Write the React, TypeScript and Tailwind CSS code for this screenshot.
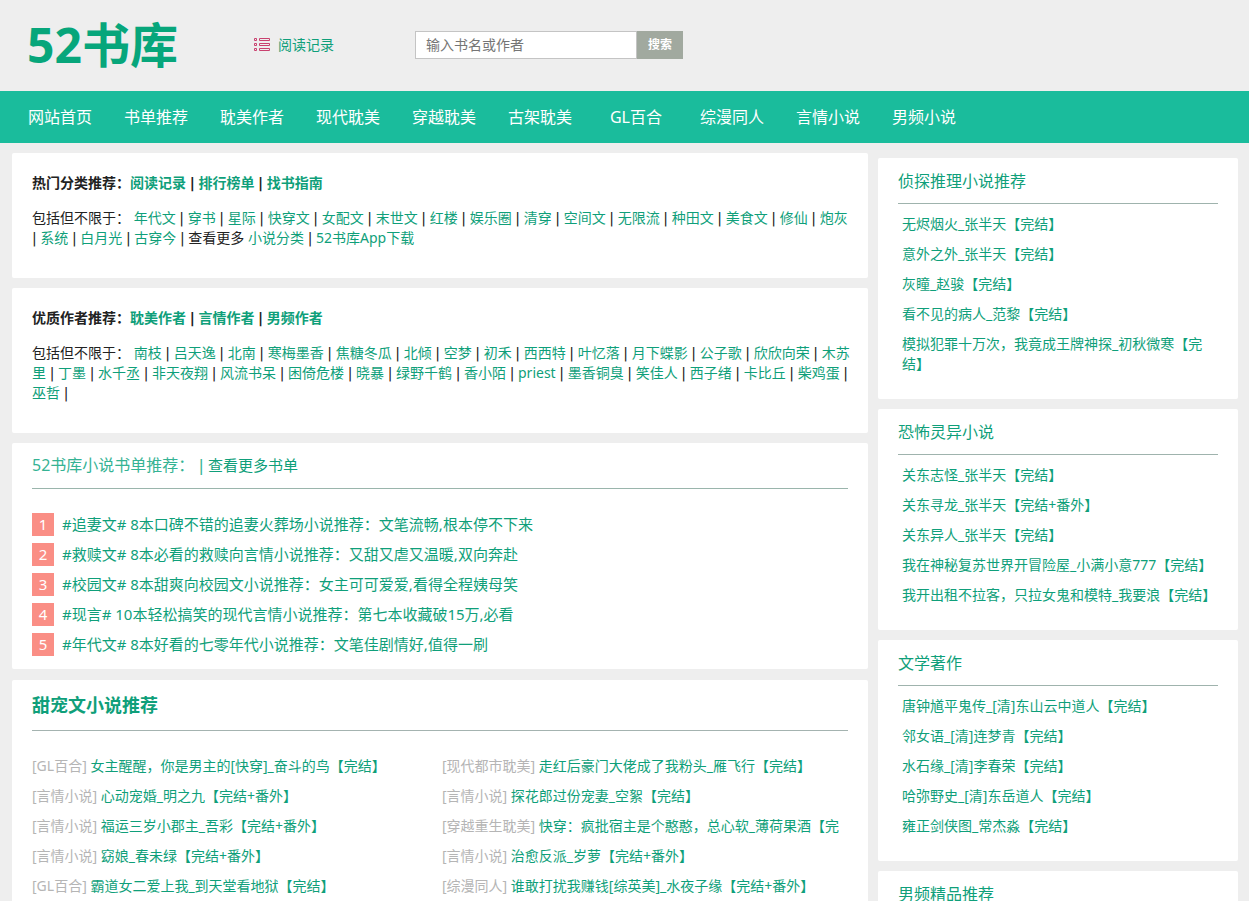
import React, { Fragment } from "react";

const navItems = ["网站首页", "书单推荐", "耽美作者", "现代耽美", "穿越耽美", "古架耽美", "GL百合", "综漫同人", "言情小说", "男频小说"];

const categories = ["年代文", "穿书", "星际", "快穿文", "女配文", "末世文", "红楼", "娱乐圈", "清穿", "空间文", "无限流", "种田文", "美食文", "修仙", "炮灰", "系统", "白月光", "古穿今"];

const authors = ["南枝", "吕天逸", "北南", "寒梅墨香", "焦糖冬瓜", "北倾", "空梦", "初禾", "西西特", "叶忆落", "月下蝶影", "公子歌", "欣欣向荣", "木苏里", "丁墨", "水千丞", "非天夜翔", "风流书呆", "困倚危楼", "晓暴", "绿野千鹤", "香小陌", "priest", "墨香铜臭", "笑佳人", "西子绪", "卡比丘", "柴鸡蛋", "巫哲"];

const bookLists = [
  "#追妻文# 8本口碑不错的追妻火葬场小说推荐：文笔流畅,根本停不下来",
  "#救赎文# 8本必看的救赎向言情小说推荐：又甜又虐又温暖,双向奔赴",
  "#校园文# 8本甜爽向校园文小说推荐：女主可可爱爱,看得全程姨母笑",
  "#现言# 10本轻松搞笑的现代言情小说推荐：第七本收藏破15万,必看",
  "#年代文# 8本好看的七零年代小说推荐：文笔佳剧情好,值得一刷",
];

const sweetNovels: [string, string][] = [
  ["GL百合", "女主醒醒，你是男主的[快穿]_奋斗的鸟【完结】"],
  ["现代都市耽美", "走红后豪门大佬成了我粉头_雁飞行【完结】"],
  ["言情小说", "心动宠婚_明之九【完结+番外】"],
  ["言情小说", "探花郎过份宠妻_空絮【完结】"],
  ["言情小说", "福运三岁小郡主_吾彩【完结+番外】"],
  ["穿越重生耽美", "快穿：疯批宿主是个憨憨，总心软_薄荷果酒【完结】"],
  ["言情小说", "窈娘_春未绿【完结+番外】"],
  ["言情小说", "治愈反派_岁萝【完结+番外】"],
  ["GL百合", "霸道女二爱上我_到天堂看地狱【完结】"],
  ["综漫同人", "谁敢打扰我赚钱[综英美]_水夜子缘【完结+番外】"],
];

const sidebar = [
  {
    title: "侦探推理小说推荐",
    items: ["无烬烟火_张半天【完结】", "意外之外_张半天【完结】", "灰瞳_赵骏【完结】", "看不见的病人_范黎【完结】", "模拟犯罪十万次，我竟成王牌神探_初秋微寒【完结】"],
  },
  {
    title: "恐怖灵异小说",
    items: ["关东志怪_张半天【完结】", "关东寻龙_张半天【完结+番外】", "关东异人_张半天【完结】", "我在神秘复苏世界开冒险屋_小满小意777【完结】", "我开出租不拉客，只拉女鬼和模特_我要浪【完结】"],
  },
  {
    title: "文学著作",
    items: ["唐钟馗平鬼传_[清]东山云中道人【完结】", "邻女语_[清]连梦青【完结】", "水石缘_[清]李春荣【完结】", "哈弥野史_[清]东岳道人【完结】", "雍正剑侠图_常杰淼【完结】"],
  },
  { title: "男频精品推荐", items: [] },
];

function Link({ children, className = "" }: { children: React.ReactNode; className?: string }) {
  return (
    <a href="#" className={`text-[#0f9f7a] hover:underline ${className}`}>
      {children}
    </a>
  );
}

function Bar() {
  return (
    <>
      {" "}
      <span className="font-['DejaVu_Sans',sans-serif]">|</span>{" "}
    </>
  );
}

function Topic({ title, links, children }: { title: string; links: string[]; children: React.ReactNode }) {
  return (
    <section className="rounded-[2px] bg-white pt-5 pr-[15px] pb-[30px] pl-5 text-sm leading-5">
      <h2 className="mb-[15px] font-bold">
        {title}
        {links.map((text, i) => (
          <Fragment key={text}>
            {i > 0 && <Bar />}
            <Link>{text}</Link>
          </Fragment>
        ))}
      </h2>
      <p>包括但不限于： {children}</p>
    </section>
  );
}

export default function App() {
  return (
    <div className="h-screen overflow-hidden bg-[#eeeeee] font-['Noto_Sans','Noto_Sans_CJK_SC',sans-serif] text-[#222222]">
      <header className="flex h-[91px] items-center pb-px pl-[27px]">
        <h1 className="w-[227px] shrink-0 text-5xl font-bold">
          <a href="#" className="text-[#07a67b]">52书库</a>
        </h1>
        <div className="w-[161px] shrink-0">
          <a href="#" className="inline-flex items-center gap-2 text-sm leading-5 text-[#0f9f7a]">
            <svg width="16" height="13" viewBox="0 0 16 13" fill="none" stroke="#c9416f" aria-hidden="true">
              <path d="M.5 .5h2v2h-2zM.5 5.5h2v2h-2zM.5 10.5h2v2h-2zM5.5 .5h10v2h-10zM5.5 5.5h10v2h-10zM5.5 10.5h10v2h-10z" />
            </svg>
            阅读记录
          </a>
        </div>
        <form className="flex h-7" onSubmit={(e) => e.preventDefault()}>
          <input
            type="text"
            aria-label="输入书名或作者"
            placeholder="输入书名或作者"
            className="w-[222px] border border-[#c4c4c4] bg-white px-[10px] text-sm outline-none placeholder:text-[#757575]"
          />
          <button type="submit" className="w-[46px] bg-[#a1a99f] text-xs font-bold text-white">搜索</button>
        </form>
      </header>

      <nav className="flex h-[52px] items-center bg-[#1abc9c] px-3">
        {navItems.map((item) => (
          <a key={item} href="#" className="w-24 text-center text-base text-white">{item}</a>
        ))}
      </nav>

      <div className="flex items-start gap-[10px] pt-[10px] pr-[11px] pl-3">
        <main className="flex min-w-0 flex-1 flex-col gap-[10px]">
          <Topic title="热门分类推荐：" links={["阅读记录", "排行榜单", "找书指南"]}>
            {categories.map((text) => (
              <Fragment key={text}>
                <Link>{text}</Link>
                <Bar />
              </Fragment>
            ))}
            查看更多 <Link>小说分类</Link>
            <Bar />
            <Link>52书库App下载</Link>
          </Topic>

          <Topic title="优质作者推荐：" links={["耽美作者", "言情作者", "男频作者"]}>
            {authors.map((text) => (
              <Fragment key={text}>
                <Link>{text}</Link>
                <Bar />
              </Fragment>
            ))}
          </Topic>

          <section className="rounded-[2px] bg-white px-5 pb-[10px]">
            <h2 className="flex h-[46px] items-center border-b border-[#9ab5ac] text-base text-[#35b394]">
              <span className="whitespace-pre">52书库小说书单推荐：<Bar /></span>
              <Link className="text-[15px]">查看更多书单</Link>
            </h2>
            <ol className="pt-5">
              {bookLists.map((text, i) => (
                <li key={text} className="flex h-[30px] items-center gap-2 text-[15px]">
                  <span className="w-[22px] bg-[#fa8e85] text-center leading-[23px] text-white">{i + 1}</span>
                  <Link>{text}</Link>
                </li>
              ))}
            </ol>
          </section>

          <section className="mt-px rounded-[2px] bg-white pb-5 pl-5">
            <h2 className="mr-5 flex h-[51px] items-center border-b border-[#a4b3b0] text-lg font-bold">
              <Link>甜宠文小说推荐</Link>
            </h2>
            <ul className="mr-4 grid grid-cols-2 pt-5 text-sm leading-[30px]">
              {sweetNovels.map(([tag, text]) => (
                <li key={text} className="h-[30px] overflow-hidden">
                  <span className="text-[#b5b5b5]">[{tag}]</span> <Link>{text}</Link>
                </li>
              ))}
            </ul>
          </section>
        </main>

        <aside className="mt-[5px] flex w-[360px] shrink-0 flex-col gap-[10px]">
          {sidebar.map(({ title, items }) => (
            <section key={title} className="rounded-[2px] bg-white px-5 pb-5">
              <h2 className="flex h-[46px] items-center border-b border-[#9fb3ad] text-base">
                <Link>{title}</Link>
              </h2>
              <ul className="pt-[5px] pl-1 text-sm leading-5">
                {items.map((text) => (
                  <li key={text} className="py-[5px]">
                    <Link>{text}</Link>
                  </li>
                ))}
              </ul>
            </section>
          ))}
        </aside>
      </div>
    </div>
  );
}
